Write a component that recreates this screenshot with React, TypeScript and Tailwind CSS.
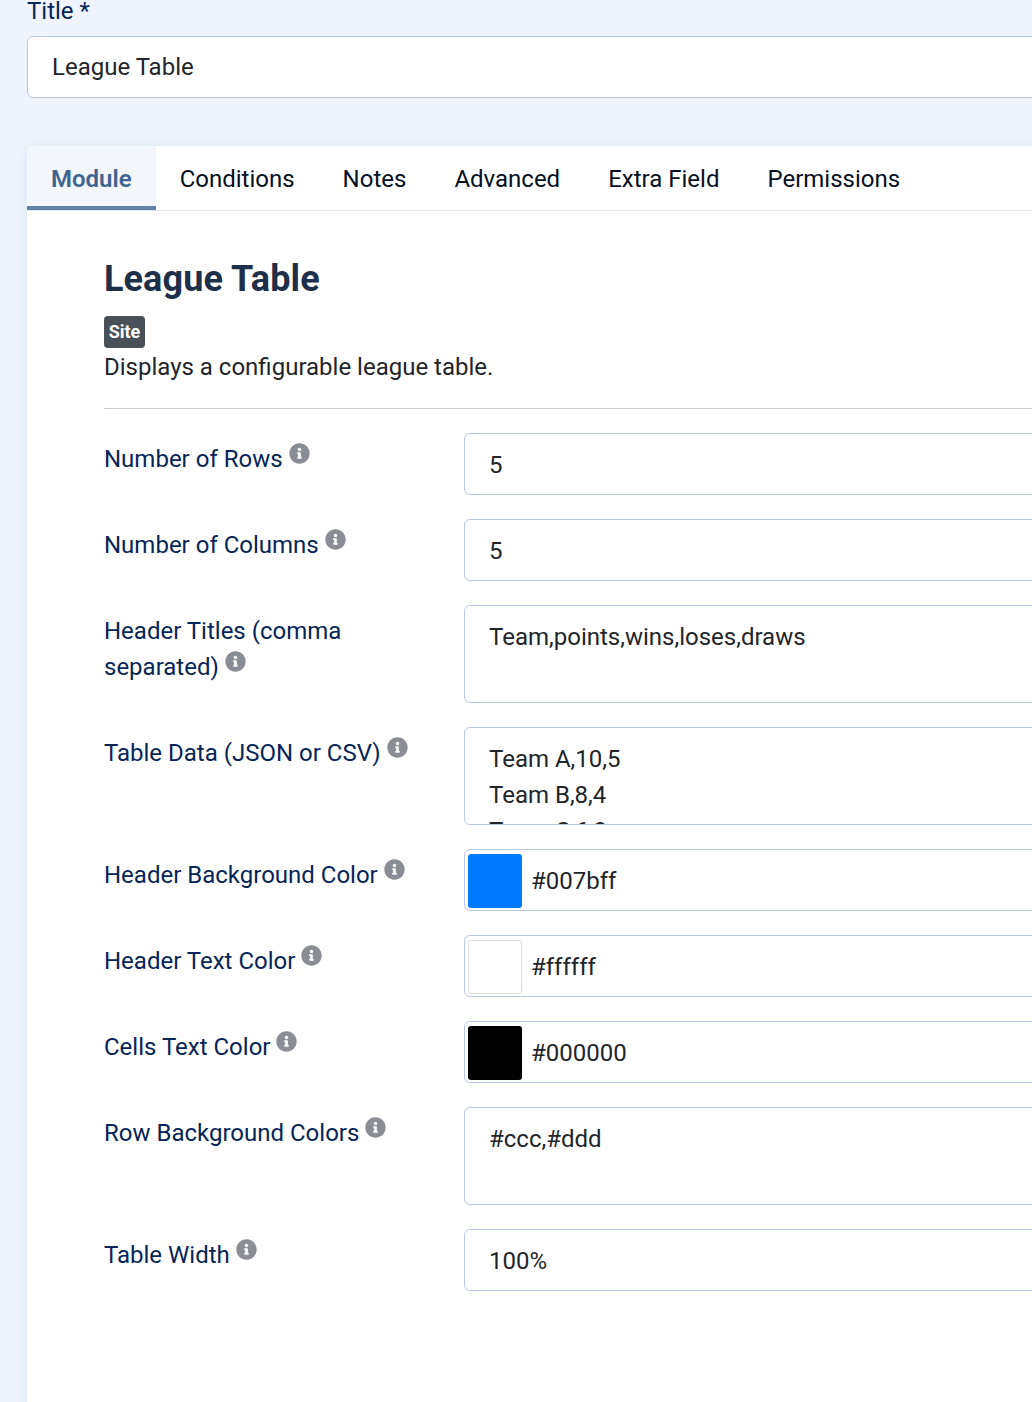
import React from "react";
import { FaInfoCircle } from "react-icons/fa";

const tabs = ["Conditions", "Notes", "Advanced", "Extra Field", "Permissions"];

const titleClass =
  "block h-[62px] w-full rounded-md border border-[#b8c9e1] bg-white px-6 py-3 text-2xl leading-9 text-[#22262a] outline-none";
const inputClass =
  "block h-[62px] w-full rounded-md border border-[#b8c9e1] bg-white px-6 pt-[13px] pb-[11px] text-2xl leading-9 text-[#22262a] outline-none";
const areaClass =
  "block h-[98px] w-full resize-none overflow-hidden rounded-md border border-[#b8c9e1] bg-white px-6 pt-[13px] pb-3 text-2xl leading-9 text-[#22262a] outline-none";

const Label = ({ children }: { children: React.ReactNode }) => (
  <label className="block w-[360px] shrink-0 pt-2 pr-8 text-2xl leading-9 text-[#082557]">
    {children}
    <FaInfoCircle className="relative -top-[3px] ml-[6px] inline-block size-[21px] align-baseline text-[#8a8d93]" />
  </label>
);

const ColorInput = ({ value, swatch }: { value: string; swatch: string }) => (
  <div className="flex h-[62px] w-full items-center rounded-md border border-[#b8c9e1] bg-white pt-[2px] pl-[3px] text-2xl leading-9 text-[#22262a]">
    <div className={swatch} />
    <span className="ml-[9px]">{value}</span>
  </div>
);

const App = () => {
  return (
    <div className="h-[1402px] w-full overflow-hidden bg-[#eff4fc] font-['Roboto',sans-serif]">
      <div className="-mt-[7px] ml-[27px] w-[1100px]">
        <label className="mb-[7px] block text-2xl leading-9 text-[#082557]">Title *</label>
        <input readOnly value="League Table" className={titleClass} />

        <div className="mt-12 h-[1300px] rounded-t-md bg-white shadow-[0_0_16px_rgba(30,60,110,0.08)]">
          <div className="flex h-[65px] border-b border-[#dfe6f0]">
            <div className="-mb-px flex h-[64px] items-center rounded-tl-md border-b-4 border-[#6480a4] bg-[#f3f6fa] px-6 pt-[6px] text-2xl [font-weight:600] text-[#41648f]">
              Module
            </div>
            {tabs.map((tab) => (
              <div key={tab} className="flex items-center px-6 pt-[2px] text-2xl text-[#06101f]">
                {tab}
              </div>
            ))}
          </div>

          <div className="px-[77px] pt-[47px]">
            <h2 className="text-4xl leading-[43px] font-bold tracking-[0.1px] text-[#1e2f4a]">League Table</h2>
            <span className="mt-[15px] block w-[41px] rounded-[4px] bg-[#495057] text-center text-lg leading-8 font-bold text-white">
              Site
            </span>
            <p className="mt-[1px] text-2xl leading-9 text-[#22262a]">Displays a configurable league table.</p>
            <hr className="mt-[23px] mb-6 border-[#c9ccd3]" />

            <div className="flex flex-col gap-6">
              <div className="flex">
                <Label>Number of Rows</Label>
                <input readOnly value="5" className={inputClass} />
              </div>
              <div className="flex">
                <Label>Number of Columns</Label>
                <input readOnly value="5" className={inputClass} />
              </div>
              <div className="flex">
                <Label>Header Titles (comma separated)</Label>
                <textarea readOnly value="Team,points,wins,loses,draws" className={areaClass} />
              </div>
              <div className="flex">
                <Label>Table Data (JSON or CSV)</Label>
                <textarea readOnly value={"Team A,10,5\nTeam B,8,4\nTeam C,6,3"} className={areaClass} />
              </div>
              <div className="flex">
                <Label>Header Background Color</Label>
                <ColorInput value="#007bff" swatch="size-[54px] rounded-[3px] bg-[#007bff]" />
              </div>
              <div className="flex">
                <Label>Header Text Color</Label>
                <ColorInput value="#ffffff" swatch="size-[54px] rounded-[3px] border border-[#dcdcdc] bg-white" />
              </div>
              <div className="flex">
                <Label>Cells Text Color</Label>
                <ColorInput value="#000000" swatch="size-[54px] rounded-[3px] bg-black" />
              </div>
              <div className="flex">
                <Label>Row Background Colors</Label>
                <textarea readOnly value="#ccc,#ddd" className={areaClass} />
              </div>
              <div className="flex">
                <Label>Table Width</Label>
                <input readOnly value="100%" className={inputClass} />
              </div>
            </div>
          </div>
        </div>
      </div>
    </div>
  );
};

export default App;
